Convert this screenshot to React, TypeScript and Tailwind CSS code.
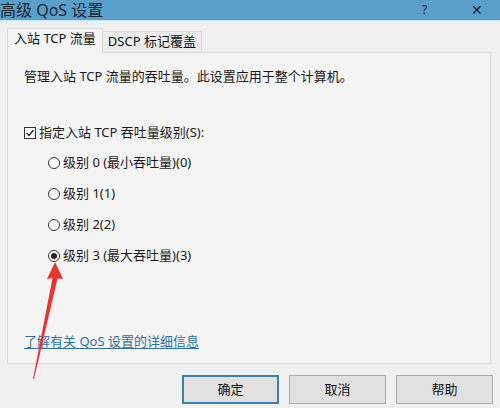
import React from "react";

const font = { fontFamily: '"Noto Sans", "Noto Sans CJK SC", sans-serif' };

function Radio({ checked, label }: { checked?: boolean; label: string }) {
  return (
    <div className="flex items-center h-[31px]">
      <span className="w-[12px] h-[12px] rounded-full border border-[#333] bg-white flex items-center justify-center">
        {checked && <span className="w-[6px] h-[6px] rounded-full bg-[#222]" />}
      </span>
      <span className="ml-[3px] text-[13px] leading-none text-[#1a1a1a]">{label}</span>
    </div>
  );
}

export default function App() {
  return (
    <div className="w-[500px] h-[408px] bg-[#f0f0f0] relative overflow-hidden" style={font}>
      {/* title bar */}
      <div className="h-[21px] bg-[#5a9fca] border-b border-[#c7e4f5] flex items-center relative">
        <span className="text-[16px] leading-[20px] text-[#1b2733]">高级 QoS 设置</span>
        <span className="absolute left-[422px] top-[3px] text-[12px] leading-[14px] text-[#1b2733]">?</span>
        <span className="absolute left-[471px] top-[3px] text-[14px] leading-[14px] text-[#1b2733]">✕</span>
      </div>

      <div className="pl-[7px] pr-[9px] pt-[7px]">
        {/* tabs */}
        <div className="flex items-end h-[24px]">
          <div className="h-[25px] -mb-px relative z-10 px-[6px] pt-[3px] bg-[#f4f4f4] border border-b-0 border-[#d9d9d9] text-[13px] leading-none text-[#111] flex items-start">
            入站 TCP 流量
          </div>
          <div className="h-[21px] px-[5px] pt-[3px] bg-[#ececec] border border-l-0 border-b-0 border-[#d9d9d9] text-[13px] leading-none text-[#111] flex items-start">
            DSCP 标记覆盖
          </div>
        </div>
        {/* panel */}
        <div className="h-[312px] border border-[#d9d9d9] bg-[#f4f4f4] pl-[16px] flex flex-col">
          <div className="mt-[17px] text-[13px] leading-none text-[#1a1a1a]">
            管理入站 TCP 流量的吞吐量。此设置应用于整个计算机。
          </div>
          <div className="mt-[43px] flex items-center">
            <span className="w-[12px] h-[12px] border border-[#333] bg-white flex items-center justify-center">
              <svg width="10" height="10" viewBox="0 0 10 10">
                <path d="M1.5 5 L4 7.5 L8.5 2" fill="none" stroke="#222" strokeWidth="1.3" />
              </svg>
            </span>
            <span className="ml-[3px] text-[13px] leading-none text-[#1a1a1a]">指定入站 TCP 吞吐量级别(S):</span>
          </div>
          <div className="mt-[8px] pl-[24px] flex flex-col">
            <Radio label="级别 0 (最小吞吐量)(0)" />
            <Radio label="级别 1(1)" />
            <Radio label="级别 2(2)" />
            <Radio checked label="级别 3 (最大吞吐量)(3)" />
          </div>
          <div className="mt-[64px] text-[13px] leading-none text-[#2f6ea6] underline underline-offset-2">
            了解有关 QoS 设置的详细信息
          </div>
        </div>
        {/* buttons */}
        <div className="flex justify-end gap-[10px] mt-[11px] mr-[-2px]">
          <button className="w-[97px] h-[29px] bg-[#e1e1e1] border-2 border-[#3b7fb3] text-[13px] leading-none text-[#111]">确定</button>
          <button className="w-[97px] h-[29px] bg-[#e1e1e1] border border-[#adadad] text-[13px] leading-none text-[#111]">取消</button>
          <button className="w-[97px] h-[29px] bg-[#e1e1e1] border border-[#adadad] text-[13px] leading-none text-[#111]">帮助</button>
        </div>
      </div>

      {/* red arrow */}
      <svg className="absolute left-0 top-0 pointer-events-none" width="500" height="408">
        <polygon points="55,262 47,279 52.5,278 33,379 34,379 57.5,278.5 63,279" fill="#e8352d" />
      </svg>
    </div>
  );
}
